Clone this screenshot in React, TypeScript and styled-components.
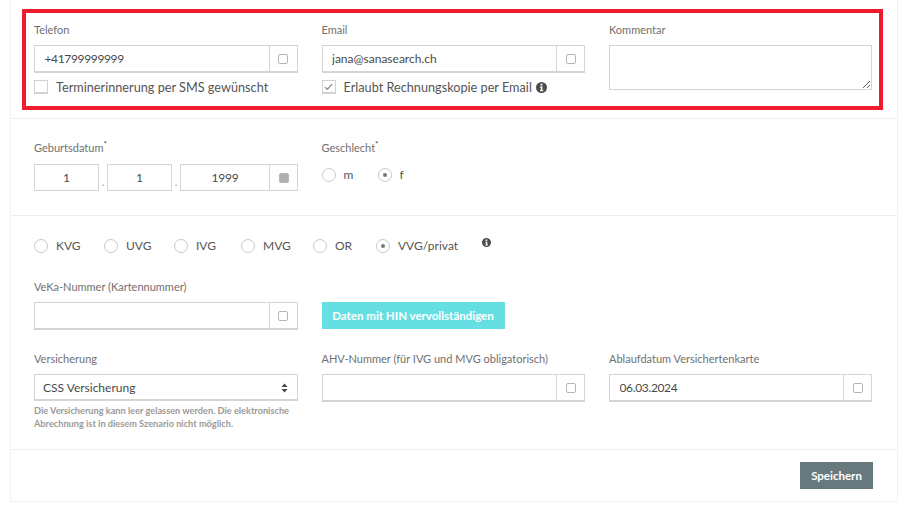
import React from 'react';
import styled, { createGlobalStyle } from 'styled-components';

const GlobalStyle = createGlobalStyle`
  html, body {
    margin: 0;
    background: #fff;
  }
  body {
    font-family: Lato, "Open Sans", sans-serif;
    color: #555;
  }
  * {
    box-sizing: border-box;
  }
`;

const Panel = styled.form`
  width: 888px;
  height: 502px;
  margin-left: 10px;
  border: solid #f1f1f1;
  border-width: 0 1px 1px;
  display: flex;
  flex-direction: column;
`;

const Section = styled.section<{ $height: number; $padding: string }>`
  height: ${({ $height }) => $height}px;
  padding: ${({ $padding }) => $padding};
  border-bottom: 1px solid #eeeeee;
  flex: none;
`;

const Highlight = styled.div`
  height: 101px;
  margin: 0 14px 0 11px;
  padding: 8px 6px 0 8px;
  border: 4px solid #ed1c2e;
`;

const Grid = styled.div<{ $gap?: number; $top?: number }>`
  display: grid;
  grid-template-columns: 263.5px 263.5px 263px;
  column-gap: 24px;
  row-gap: ${({ $gap }) => $gap ?? 0}px;
  margin-top: ${({ $top }) => $top ?? 0}px;
`;

const Field = styled.div`
  min-width: 0;
`;

const Label = styled.label`
  display: block;
  height: 24px;
  font-size: 11px;
  line-height: 18px;
  color: #707070;
`;

const DateLabel = styled(Label)`
  height: 25px;
`;

const RadioLabel = styled(Label)`
  height: 28px;
`;

const Required = styled.sup`
  font-size: 8px;
  line-height: 0;
  color: #444;
`;

const InputGroup = styled.div`
  display: flex;
  height: 28px;
  border: 1px solid #d4d4d4;
  border-bottom-width: 2px;
`;

const TextInput = styled.input<{ $numeric?: boolean }>`
  flex: 1;
  min-width: 0;
  padding: 0 9.5px;
  border: 0;
  outline: 0;
  font: 12px Lato, sans-serif;
  letter-spacing: ${({ $numeric }) => ($numeric ? '-0.35px' : '0')};
  color: #4a4a4a;
  background: transparent;
`;

const Addon = styled.span`
  width: 28px;
  flex: none;
  display: flex;
  align-items: center;
  justify-content: center;
  border-left: 1px solid #d4d4d4;
`;

const AddonIcon = styled.i<{ $filled?: boolean }>`
  display: block;
  width: 10px;
  height: 10px;
  border: 1px solid #b5b5b5;
  border-radius: 2px;
  background: ${({ $filled }) => ($filled ? '#b0b0b0' : 'transparent')};
`;

const CheckRow = styled.div`
  display: flex;
  align-items: center;
  gap: 8px;
  height: 14px;
  margin-top: 7px;
  font-size: 12.7px;
  color: #555;
`;

const CheckBox = styled.span`
  width: 14px;
  height: 14px;
  flex: none;
  display: flex;
  align-items: center;
  justify-content: center;
  border: 1px solid #d2d2d2;
  border-bottom-width: 2px;
`;

const InfoIcon = styled.svg<{ $size: number }>`
  width: ${({ $size }) => $size}px;
  height: ${({ $size }) => $size}px;
  flex: none;
  fill: #4c4c4c;
`;

const EmailInfo = styled.span`
  display: flex;
  margin-left: -4px;
`;

const CommentBox = styled.textarea`
  display: block;
  width: 100%;
  height: 45px;
  min-height: 45px;
  padding: 4px 8px;
  border: 1px solid #d4d4d4;
  border-radius: 0;
  outline: 0;
  background: #fff;
`;

const DateRow = styled.div`
  display: flex;
  align-items: stretch;
  height: 27px;
`;

const DatePart = styled.input<{ $width: number }>`
  width: ${({ $width }) => $width}px;
  flex: none;
  padding: 0;
  border: 1px solid #d4d4d4;
  border-radius: 0;
  outline: 0;
  font: 12px Lato, sans-serif;
  letter-spacing: -0.2px;
  text-align: center;
  color: #4a4a4a;
`;

const DateDot = styled.span`
  width: 8px;
  flex: none;
  font-size: 11px;
  line-height: 36px;
  text-align: center;
  color: #999;
`;

const DateAddon = styled(Addon)`
  border: 1px solid #d4d4d4;
  border-left: 0;
`;

const RadioLine = styled.div`
  display: flex;
  align-items: center;
`;

const RadioItem = styled.span<{ $width?: number }>`
  display: flex;
  align-items: center;
  gap: 8px;
  width: ${({ $width }) => ($width ? `${$width}px` : 'auto')};
  flex: none;
  font-size: 12px;
  color: #555;
`;

const Radio = styled.span<{ $checked?: boolean }>`
  width: 14px;
  height: 14px;
  flex: none;
  display: flex;
  align-items: center;
  justify-content: center;
  border: 1px solid #c9c9c9;
  border-radius: 50%;
  &::after {
    content: '';
    display: ${({ $checked }) => ($checked ? 'block' : 'none')};
    width: 4px;
    height: 4px;
    border-radius: 50%;
    background: #777;
  }
`;

const InsuranceInfo = styled.span`
  display: flex;
  margin: -6px 0 0 24px;
`;

const TealButton = styled.button`
  width: 183px;
  height: 27px;
  margin-top: 24px;
  padding: 0;
  border: 0;
  background: #66dfe2;
  color: #fff;
  font: 700 11.5px Lato, sans-serif;
`;

const SelectBox = styled.div`
  position: relative;
  height: 27px;
  border: 1px solid #d4d4d4;
  border-bottom-width: 2px;
`;

const Select = styled.select`
  display: block;
  width: 100%;
  height: 100%;
  padding: 0 8px;
  border: 0;
  outline: 0;
  appearance: none;
  background: transparent;
  font: 12px Lato, sans-serif;
  color: #4a4a4a;
`;

const SelectArrows = styled.svg`
  position: absolute;
  top: 8px;
  right: 9px;
  width: 7px;
  height: 10px;
  fill: #444;
  pointer-events: none;
`;

const HelpText = styled.p`
  margin: 4px 0 0;
  font-size: 9.2px;
  font-weight: 700;
  line-height: 12.5px;
  color: #9a9a9a;
`;

const Footer = styled.footer`
  flex: 1;
  display: flex;
  justify-content: flex-end;
  align-items: flex-start;
  padding: 12px 24px 0 0;
`;

const SaveButton = styled.button`
  width: 73px;
  height: 27px;
  padding: 0;
  border: 0;
  background: #68797e;
  color: #fff;
  font: 700 11.5px Lato, sans-serif;
`;

const Info = ({ size }: { size: number }) => (
  <InfoIcon $size={size} viewBox="0 0 16 16" aria-hidden="true">
    <path fillRule="evenodd" d="M8 0a8 8 0 1 0 0 16A8 8 0 0 0 8 0ZM6.6 2.7h2.8v2.5H6.6V2.7Zm-.7 4h3.5v5h1v1.7H5.9v-1.7h1V8.4h-1V6.7Z" />
  </InfoIcon>
);

const InputField = ({ label, value, numeric }: { label: string; value?: string; numeric?: boolean }) => (
  <Field>
    <Label>{label}</Label>
    <InputGroup>
      <TextInput readOnly value={value ?? ''} $numeric={numeric} />
      <Addon>
        <AddonIcon />
      </Addon>
    </InputGroup>
  </Field>
);

const insuranceTypes = [
  { name: 'KVG', width: 70 },
  { name: 'UVG', width: 70 },
  { name: 'IVG', width: 67 },
  { name: 'MVG', width: 72 },
  { name: 'OR', width: 63 },
];

export default function App() {
  return (
    <>
      <GlobalStyle />
      <Panel>
        <Section $height={119} $padding="9px 0 0">
          <Highlight>
            <Grid>
              <div>
                <InputField label="Telefon" value="+41799999999" numeric />
                <CheckRow>
                  <CheckBox />
                  Terminerinnerung per SMS gewünscht
                </CheckRow>
              </div>
              <div>
                <InputField label="Email" value="jana@sanasearch.ch" />
                <CheckRow>
                  <CheckBox>
                    <svg width="9" height="8" viewBox="0 0 9 8" fill="none" stroke="#888" strokeWidth="1.2">
                      <path d="M1 4.2 3.4 6.5 8 1.2" />
                    </svg>
                  </CheckBox>
                  Erlaubt Rechnungskopie per Email
                  <EmailInfo>
                    <Info size={11} />
                  </EmailInfo>
                </CheckRow>
              </div>
              <Field>
                <Label>Kommentar</Label>
                <CommentBox readOnly />
              </Field>
            </Grid>
          </Highlight>
        </Section>

        <Section $height={97} $padding="20px 0 0 23px">
          <Grid>
            <Field>
              <DateLabel>
                Geburtsdatum<Required>*</Required>
              </DateLabel>
              <DateRow>
                <DatePart readOnly value="1" $width={65} />
                <DateDot>.</DateDot>
                <DatePart readOnly value="1" $width={65} />
                <DateDot>.</DateDot>
                <DatePart readOnly value="1999" $width={90} />
                <DateAddon>
                  <AddonIcon $filled />
                </DateAddon>
              </DateRow>
            </Field>
            <Field>
              <RadioLabel>
                Geschlecht<Required>*</Required>
              </RadioLabel>
              <RadioLine>
                <RadioItem $width={56}>
                  <Radio />m
                </RadioItem>
                <RadioItem>
                  <Radio $checked />f
                </RadioItem>
              </RadioLine>
            </Field>
          </Grid>
        </Section>

        <Section $height={234} $padding="22px 0 0 23px">
          <RadioLine>
            {insuranceTypes.map((type) => (
              <RadioItem key={type.name} $width={type.width}>
                <Radio />
                {type.name}
              </RadioItem>
            ))}
            <RadioItem>
              <Radio $checked />
              VVG/privat
            </RadioItem>
            <InsuranceInfo>
              <Info size={9} />
            </InsuranceInfo>
          </RadioLine>
          <Grid $top={25} $gap={20}>
            <InputField label="VeKa-Nummer (Kartennummer)" />
            <div>
              <TealButton type="button">Daten mit HIN vervollständigen</TealButton>
            </div>
            <div />
            <Field>
              <Label>Versicherung</Label>
              <SelectBox>
                <Select defaultValue="css">
                  <option value="css">CSS Versicherung</option>
                </Select>
                <SelectArrows viewBox="0 0 7 10" aria-hidden="true">
                  <path d="M3.5 0.5 6.5 4H.5ZM3.5 9.5 .5 6h6Z" />
                </SelectArrows>
              </SelectBox>
              <HelpText>
                Die Versicherung kann leer gelassen werden. Die elektronische Abrechnung ist in diesem Szenario nicht möglich.
              </HelpText>
            </Field>
            <InputField label="AHV-Nummer (für IVG und MVG obligatorisch)" />
            <InputField label="Ablaufdatum Versichertenkarte" value="06.03.2024" numeric />
          </Grid>
        </Section>

        <Footer>
          <SaveButton type="button">Speichern</SaveButton>
        </Footer>
      </Panel>
    </>
  );
}
